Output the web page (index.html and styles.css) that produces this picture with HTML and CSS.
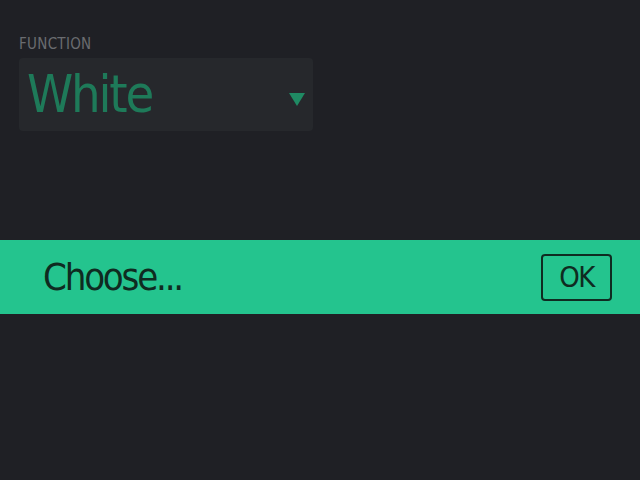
FILE: index.html
```html
<!DOCTYPE html>
<html lang="en">
<head>
    <meta charset="UTF-8">
    <title>Function picker</title>
    <link rel="stylesheet" href="styles.css">
</head>
<body>
    <div class="field">
        <div class="label">FUNCTION</div>
        <div class="select">
            <span class="value">White</span>
            <span class="arrow"></span>
        </div>
    </div>

    <div class="picker">
        <span class="prompt">Choose...</span>
        <button class="ok">OK</button>
    </div>
</body>
</html>
```
FILE: styles.css
```css
html, body { margin: 0; height: 100%; }
body { background: #1f2025; font-family: "DejaVu Sans Condensed", "DejaVu Sans", sans-serif; font-stretch: condensed; }

.field { padding: 35px 0 0 19px; }
.label { color: #6a6c70; font-size: 15px; line-height: 18px; letter-spacing: 0.3px; font-weight: 300; }
.select { width: 294px; height: 73px; margin-top: 5px; background: #26282c; border-radius: 4px;
          display: flex; align-items: center; justify-content: space-between; box-sizing: border-box; padding: 0 8px 0 8px; }
.value { color: #1e7a59; font-size: 52px; letter-spacing: -2.2px; line-height: 73px; font-weight: 300; }
.arrow { width: 0; height: 0; border-left: 8px solid transparent; border-right: 8px solid transparent;
         border-top: 13px solid #1f8a63; margin-top: 10px; }

.picker { margin-top: 109px; height: 74px; background: #24c48e; display: flex; align-items: center;
          justify-content: space-between; padding: 0 28px 0 43px; }
.prompt { color: #0f2b21; font-size: 38px; letter-spacing: -2.2px; }
.ok { font-family: inherit; font-stretch: condensed; background: transparent; color: #0f2b21; font-size: 29px;
      border: 2px solid #0f2b21; border-radius: 4px; width: 71px; height: 47px; padding: 0; letter-spacing: -1.5px; }
```
